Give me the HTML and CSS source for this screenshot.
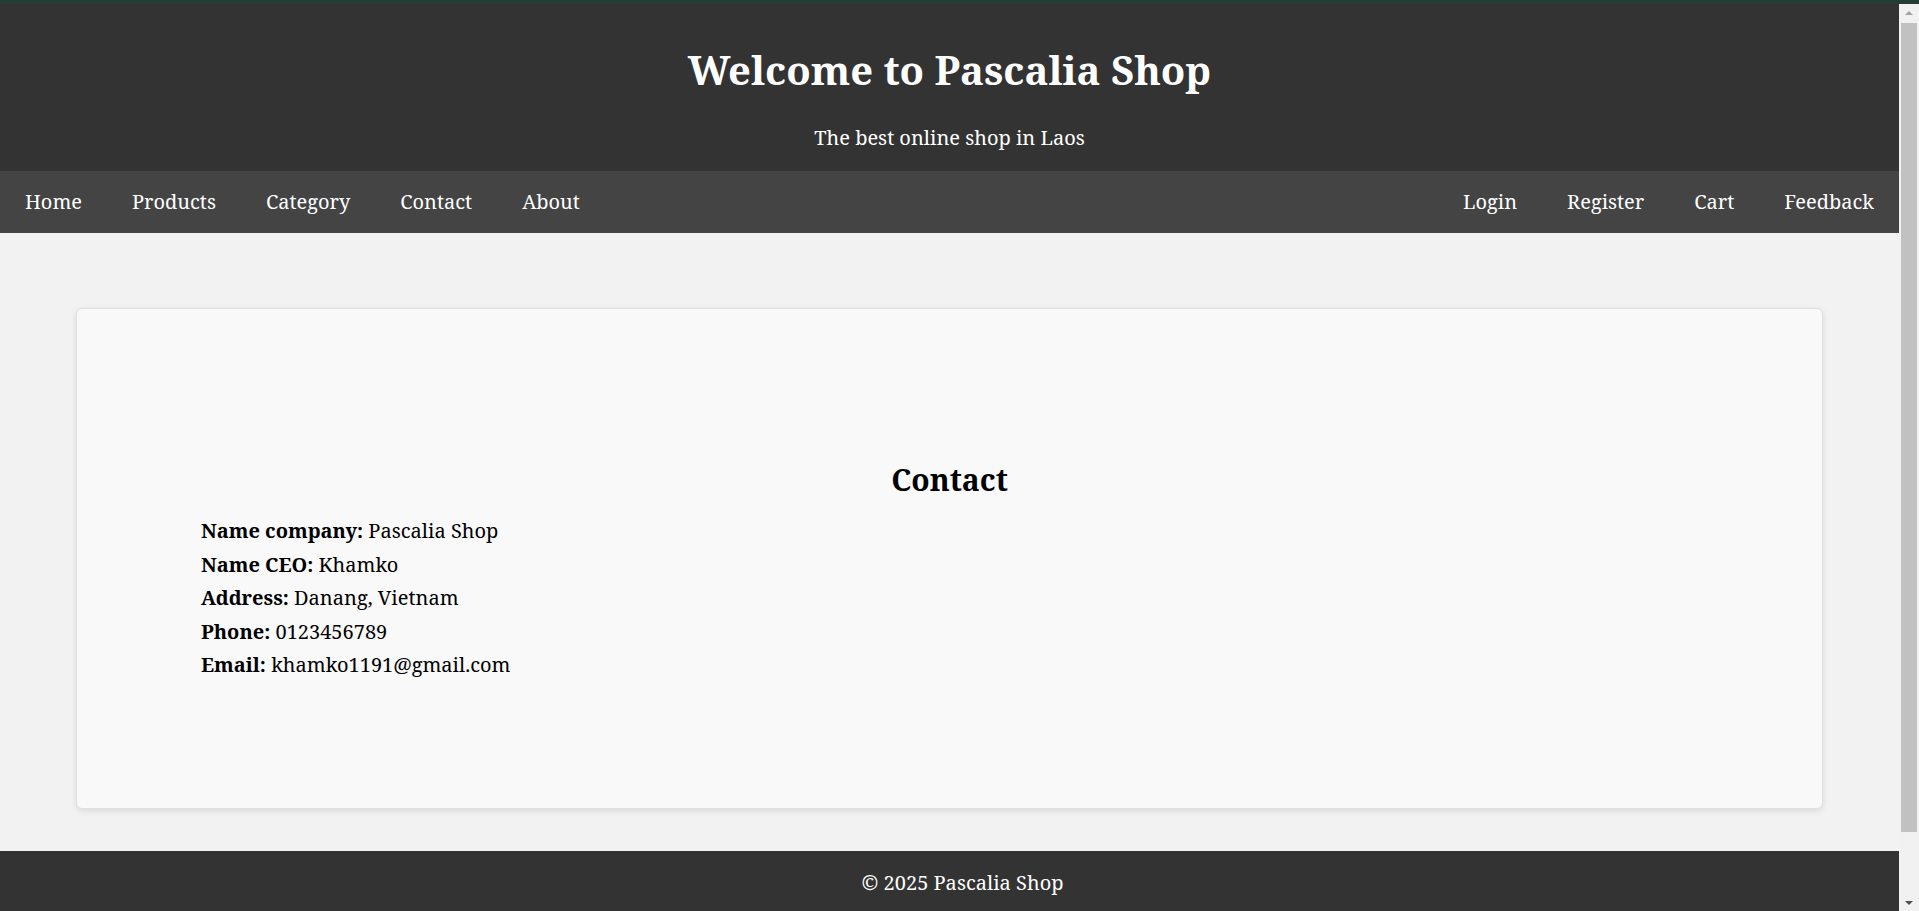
FILE: index.html
```html
<!DOCTYPE html>
<html lang="en">
<head>
<meta charset="utf-8">
<title>Pascalia Shop - Contact</title>
<link rel="stylesheet" href="styles.css">
</head>
<body>
<div class="page">
  <header class="site-header">
    <h1 class="site-title">Welcome to Pascalia Shop</h1>
    <p class="site-tagline">The best online shop in Laos</p>
  </header>
  <nav class="main-nav">
    <div class="nav-group">
      <a class="nav-link" href="#">Home</a>
      <a class="nav-link" href="#">Products</a>
      <a class="nav-link" href="#">Category</a>
      <a class="nav-link" href="#">Contact</a>
      <a class="nav-link" href="#">About</a>
    </div>
    <div class="nav-group">
      <a class="nav-link" href="#">Login</a>
      <a class="nav-link" href="#">Register</a>
      <a class="nav-link" href="#">Cart</a>
      <a class="nav-link" href="#">Feedback</a>
    </div>
  </nav>
  <main class="page-main">
    <section class="contact-card">
      <h2 class="contact-title">Contact</h2>
      <div class="contact-list">
        <p class="contact-line"><strong>Name company:</strong> Pascalia Shop</p>
        <p class="contact-line"><strong>Name CEO:</strong> Khamko</p>
        <p class="contact-line"><strong>Address:</strong> Danang, Vietnam</p>
        <p class="contact-line"><strong>Phone:</strong> 0123456789</p>
        <p class="contact-line"><strong>Email:</strong> khamko1191@gmail.com</p>
      </div>
    </section>
  </main>
  <footer class="site-footer">
    <p class="footer-text">&copy; 2025 Pascalia Shop</p>
  </footer>
</div>
<div class="scrollbar" aria-hidden="true">
  <span class="scroll-btn scroll-up"></span>
  <span class="scroll-track"><span class="scroll-thumb"></span></span>
  <span class="scroll-btn scroll-down"></span>
</div>
</body>
</html>
```
FILE: styles.css
```css
html, body { margin: 0; padding: 0; }
body {
  font-family: "Noto Serif", "DejaVu Serif", serif;
  font-size: 20px;
  background: #f2f2f2;
  border-top: 4px solid #263d33;
  color: #000;
}
.page { width: calc(100% - 20px); }
.site-header {
  background: #333333;
  color: #fff;
  text-align: center;
  padding: 42px 0 21px;
}
.site-title { margin: 0; font-size: 40px; line-height: 48px; font-weight: bold; }
.site-tagline { margin: 32px 0 0; font-size: 20px; line-height: 24px; }
.main-nav {
  background: #444444;
  display: flex;
  justify-content: space-between;
}
.nav-group { display: flex; }
.nav-link {
  color: #fff;
  text-decoration: none;
  font-size: 20px;
  line-height: 22px;
  padding: 20px 25px;
}
.page-main { padding: 75px 76px 42px; }
.contact-card {
  background: #f9f9f9;
  border: 1px solid #e0e0e0;
  border-radius: 6px;
  box-shadow: 0 2px 6px rgba(0,0,0,0.1);
  height: 499px;
  padding: 0 124px;
}
.contact-title { text-align: center; font-size: 30px; margin: 153px 0 16px; line-height: 36px; }
.contact-line { margin: 0; font-size: 20px; line-height: 33.5px; }
.site-footer { background: #333; color: #fff; text-align: center; padding: 18.5px 0 70px 26px; }
.footer-text { margin: 0; font-size: 20px; line-height: 26px; }

.scrollbar {
  position: fixed;
  right: 0;
  top: 4px;
  bottom: 0;
  width: 20px;
  background: #f1f1f1;
  display: flex;
  flex-direction: column;
}
.scroll-btn {
  height: 17px;
  flex: none;
  display: flex;
  align-items: center;
  justify-content: center;
}
.scroll-btn::before {
  content: "";
  width: 0;
  height: 0;
  border-left: 4px solid transparent;
  border-right: 4px solid transparent;
}
.scroll-up::before { border-bottom: 4px solid #a3a3a3; }
.scroll-down::before { border-top: 4px solid #505050; }
.scroll-track { flex: 1; display: flex; flex-direction: column; padding: 2px 2px 0 2px; }
.scroll-thumb { height: 809px; background: #c1c1c1; }
```
